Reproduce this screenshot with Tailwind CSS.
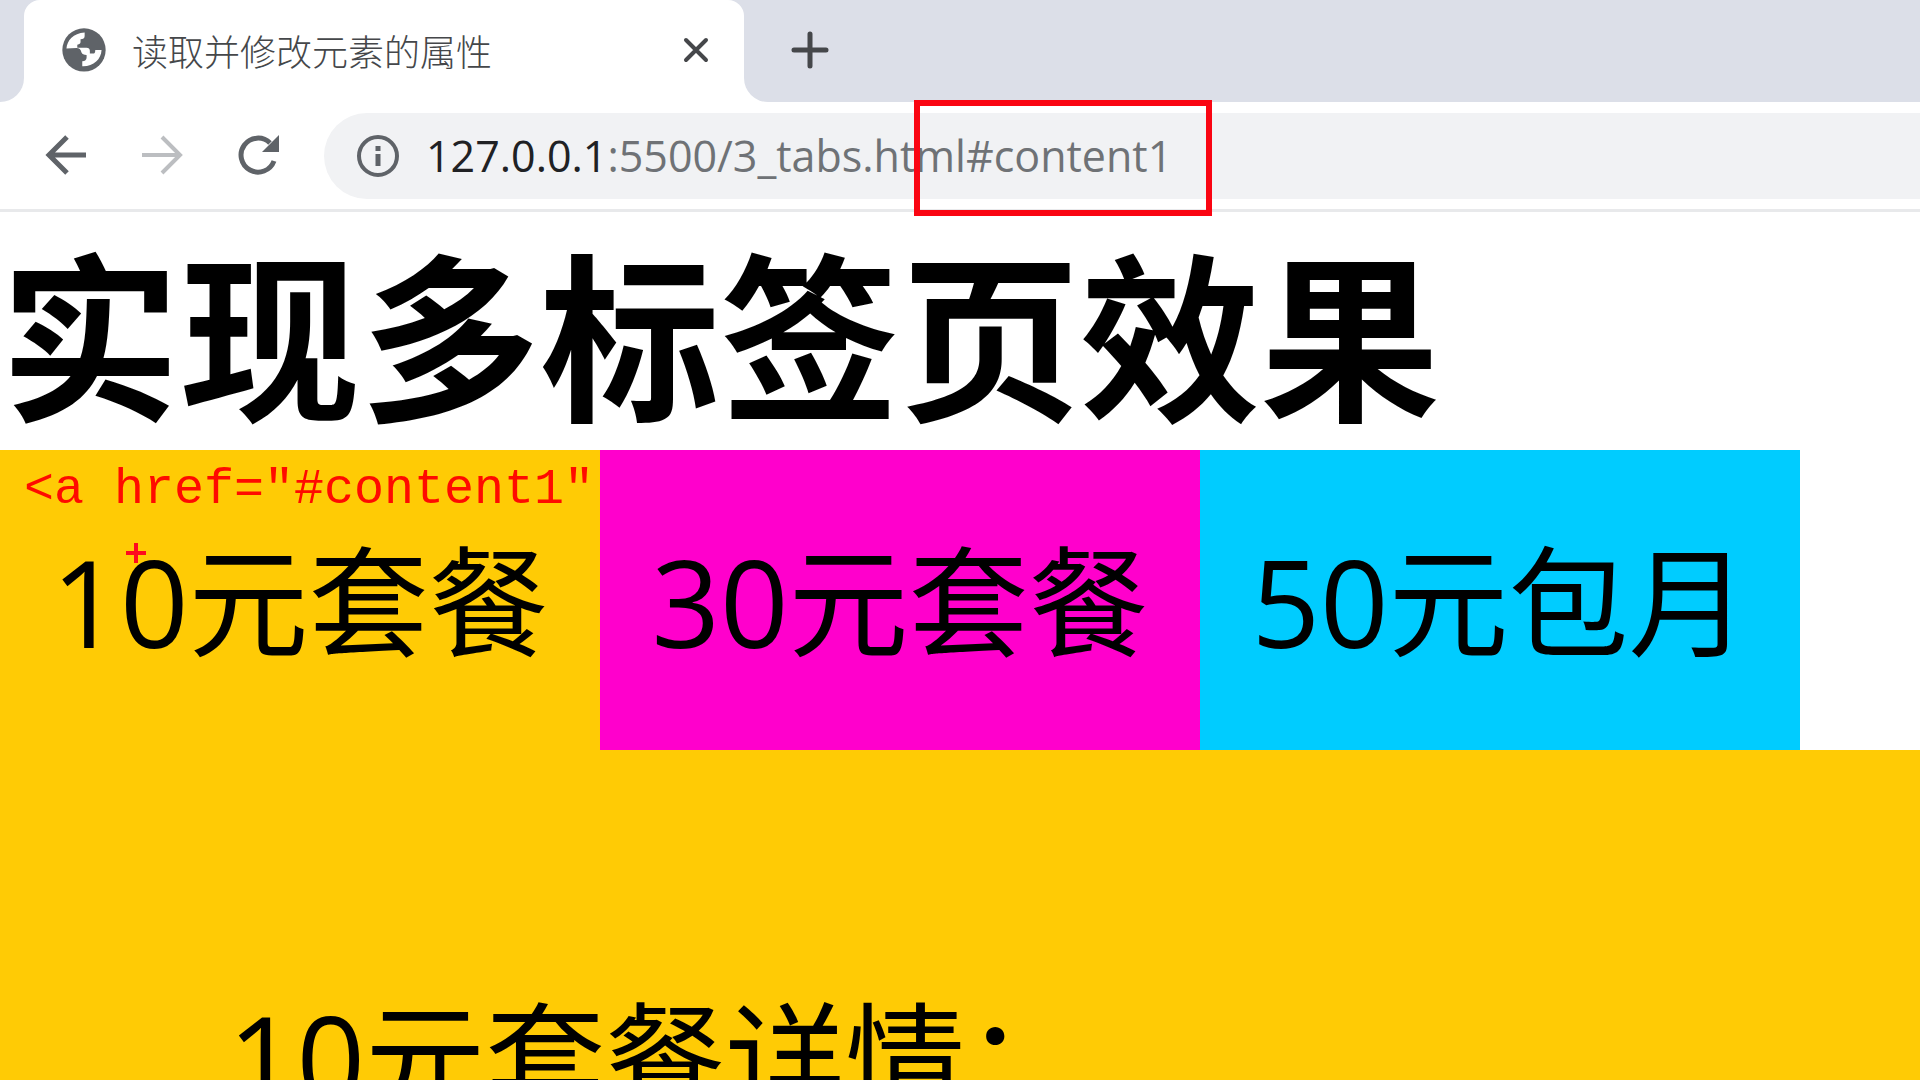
<!DOCTYPE html>
<html lang="zh-CN">
<head>
<meta charset="utf-8">
<title>读取并修改元素的属性</title>
<script src="https://cdn.jsdelivr.net/npm/@tailwindcss/browser@4"></script>
</head>
<body class="flex h-screen flex-col overflow-hidden bg-white font-['Open_Sans','Noto_Sans_CJK_SC',sans-serif] text-black">
  <header class="shrink-0 border-b-3 border-[#e8e9eb]">
    <div class="flex h-[102px]">
      <div class="w-6 rounded-br-3xl bg-[#dcdfe8]"></div>
      <div class="w-[720px] bg-[#dcdfe8]">
        <div class="flex h-full items-center rounded-t-2xl bg-white pr-8 pl-[34px]">
          <svg class="size-[52px]" viewBox="0 0 24 24"><circle cx="12" cy="11.500" r="10" fill="#5f6368"/><path fill="#fff" d="M3.900 10.800C4.200 7.200 7 3.900 12.300 3.500v1.600c0 1-.7 1.500-1.900 1.500v1.300c0 .7-.5 1.100-1.500 1.200v1.400h4.300c.9 0 1.500.5 1.500 1.400v1.300h1.400c.9 0 1.100-.6 1.100-1.700h2.900c-.1 4.300-3.900 7.700-8.900 7.500v-2.300c1.300 0 2-.6 2-1.700v-1.200c-1.300 0-2.100-.4-2.400-1.200-.2-1.400-1-2-2.300-2z"/></svg>
          <span class="grow pt-1 pl-[22px] text-4xl font-light text-[#45474a]">读取并修改元素的属性</span>
          <button class="flex size-8 items-center justify-center" aria-label="关闭标签页"><svg class="size-8" viewBox="0 0 32 32" fill="none" stroke="#45474a" stroke-width="4" stroke-linecap="round"><path d="M6 5 26 25M26 5 6 25"/></svg></button>
        </div>
      </div>
      <div class="flex grow items-center rounded-bl-3xl bg-[#dcdfe8] pl-11">
        <button class="size-11" aria-label="新标签页"><svg class="size-11" viewBox="0 0 44 44" fill="none" stroke="#45474a" stroke-width="5" stroke-linecap="round"><path d="M22 5v32M6 21h32"/></svg></button>
      </div>
    </div>
    <div class="relative flex h-[107px] items-center pl-10">
      <nav class="flex w-[284px] gap-11">
        <button class="size-[52px]" aria-label="后退"><svg class="size-[52px]" viewBox="0 0 52 52" fill="none" stroke="#5f6368" stroke-width="5"><path d="M46 25H10M27 7 9 25l18 18"/></svg></button>
        <button class="size-[52px]" aria-label="前进"><svg class="size-[52px]" viewBox="0 0 52 52" fill="none" stroke="#bcbec1" stroke-width="4"><path d="M6 25h37M26 7l18 18-18 18"/></svg></button>
        <button class="size-[52px]" aria-label="重新加载"><svg class="size-[52px]" viewBox="0 0 52 52" fill="none" stroke="#5f6368" stroke-width="5"><path d="M42 31A17 17 0 1 1 38 13"/><path d="M47 5v17H30z" fill="#5f6368" stroke="none"/></svg></button>
      </nav>
      <div class="flex h-[86px] grow items-center rounded-l-full bg-[#f1f2f4] pl-[30px]">
        <svg class="size-12" viewBox="0 0 48 48" fill="none" stroke="#5f6368" stroke-width="4"><circle cx="24" cy="24" r="19"/><path d="M24 22v12M24 14v5" stroke-width="5"/></svg>
        <a href="#content1" class="pl-6 text-[43px] leading-none whitespace-nowrap text-[#6f7276]"><span class="text-[#202124]">127.0.0.1</span>:5500/3_tabs.html#content1</a>
      </div>
      <div class="absolute -top-0.5 left-[914px] h-[116px] w-[298px] border-6 border-[#fa0512]"></div>
    </div>
  </header>
  <main class="flex grow flex-col">
    <h1 class="pt-[14px] text-[180px] leading-[224px] font-bold whitespace-nowrap">实现多标签页效果</h1>
    <nav class="flex h-[300px] shrink-0 text-center text-[120px] leading-[296px] whitespace-nowrap">
      <a href="#content1" class="relative w-[600px] bg-[#ffcb05] pt-1">10元套餐
        <span class="absolute top-0 left-6 font-['Liberation_Mono',monospace] text-[50px] leading-[80px] text-[#ff0a00]">&lt;a href="#content1"</span>
        <svg class="absolute top-[93px] left-[126px] size-5" viewBox="0 0 20 20" fill="none" stroke="#ff0a1e" stroke-width="4"><path d="M10 0v20M0 10h20"/></svg>
      </a>
      <a href="#content2" class="w-[600px] bg-[#ff00cc] pt-1">30元套餐</a>
      <a href="#content3" class="w-[600px] bg-[#00ccff] pt-1">50元包月</a>
    </nav>
    <section id="content1" class="grow bg-[#ffcb05] pt-52 pl-[228px] text-[120px] leading-[200px] whitespace-nowrap">10元套餐详情：</section>
  </main>
</body>
</html>
